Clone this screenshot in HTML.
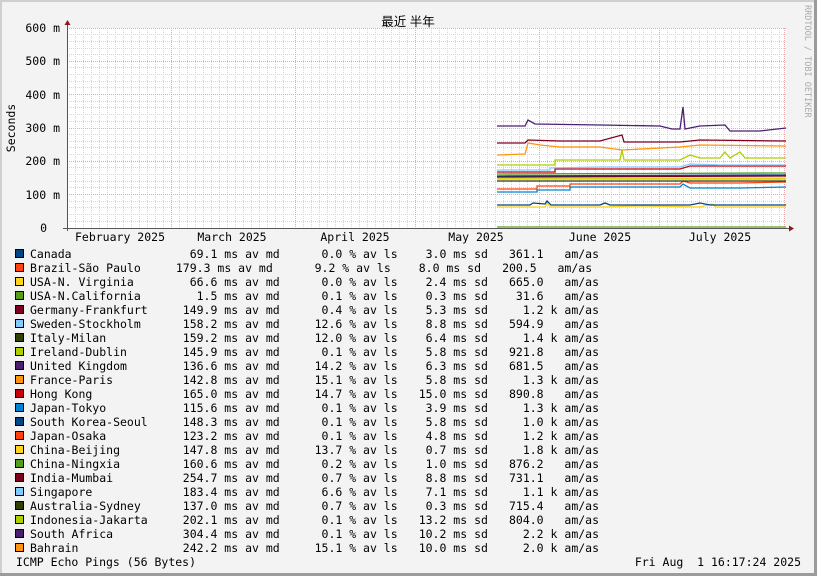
<!DOCTYPE html>
<html><head><meta charset="utf-8"><style>
html,body{margin:0;padding:0;background:#f3f3f3;}
svg{display:block;}
text{font-family:"DejaVu Sans Mono","Liberation Mono",monospace;font-size:11.5px;fill:#000;}
.e{text-anchor:end;}
</style></head><body>
<svg width="817" height="576" viewBox="0 0 817 576" xmlns="http://www.w3.org/2000/svg">
<rect x="0" y="0" width="817" height="576" fill="#f3f3f3"/>
<rect x="0" y="0" width="817" height="2" fill="#cfcfcf"/>
<rect x="0" y="0" width="2" height="576" fill="#cfcfcf"/>
<rect x="0" y="573" width="817" height="3" fill="#9b9b9b"/>
<rect x="814" y="0" width="3" height="576" fill="#9b9b9b"/>
<rect x="67" y="28" width="719" height="200" fill="#fff"/>
<g stroke="#d6d6d6" stroke-width="1" stroke-dasharray="1,1">
<path d="M67 34.5H786M67 41.5H786M67 48.5H786M67 54.5H786M67 67.5H786M67 74.5H786M67 81.5H786M67 87.5H786M67 101.5H786M67 107.5H786M67 114.5H786M67 121.5H786M67 134.5H786M67 141.5H786M67 147.5H786M67 154.5H786M67 167.5H786M67 174.5H786M67 181.5H786M67 187.5H786M67 201.5H786M67 207.5H786M67 214.5H786M67 221.5H786"/>
<path d="M75.5 28V228M83.5 28V228M91.5 28V228M99.5 28V228M107.5 28V228M115.5 28V228M123.5 28V228M131.5 28V228M139.5 28V228M147.5 28V228M155.5 28V228M163.5 28V228M179.5 28V228M187.5 28V228M195.5 28V228M203.5 28V228M211.5 28V228M219.5 28V228M227.5 28V228M235.5 28V228M243.5 28V228M251.5 28V228M259.5 28V228M267.5 28V228M275.5 28V228M283.5 28V228M303.5 28V228M311.5 28V228M319.5 28V228M327.5 28V228M335.5 28V228M343.5 28V228M351.5 28V228M359.5 28V228M367.5 28V228M375.5 28V228M383.5 28V228M391.5 28V228M399.5 28V228M407.5 28V228M423.5 28V228M431.5 28V228M439.5 28V228M447.5 28V228M455.5 28V228M463.5 28V228M471.5 28V228M479.5 28V228M487.5 28V228M495.5 28V228M503.5 28V228M511.5 28V228M519.5 28V228M527.5 28V228M547.5 28V228M555.5 28V228M563.5 28V228M571.5 28V228M579.5 28V228M587.5 28V228M595.5 28V228M603.5 28V228M611.5 28V228M619.5 28V228M627.5 28V228M635.5 28V228M643.5 28V228M651.5 28V228M667.5 28V228M675.5 28V228M683.5 28V228M691.5 28V228M699.5 28V228M707.5 28V228M715.5 28V228M723.5 28V228M731.5 28V228M739.5 28V228M747.5 28V228M755.5 28V228M763.5 28V228M771.5 28V228M779.5 28V228"/>
</g>
<g stroke="#e8a8a8" stroke-width="1" stroke-dasharray="1,1">
<path d="M67 28.5H786M67 61.5H786M67 94.5H786M67 128.5H786M67 161.5H786M67 194.5H786"/>
<path d="M171.5 28V228M295.5 28V228M415.5 28V228M539.5 28V228M659.5 28V228M784.5 28V228"/>
</g>
<g fill="none" stroke-width="1.3">
<polyline stroke="#579d1c" points="497,227 786,227"/>
<polyline stroke="#ffd320" points="497,207 545,207 547,203 550,207 600,207 640,206 700,207 712,204 716,207 786,207"/>
<polyline stroke="#004586" points="497,205 530,205 533,203 545,204 547,201 551,205 600,205 605,203 610,205 690,205 700,203 710,205 786,205"/>
<polyline stroke="#0084d1" points="497,192 537,192 537,190 570,190 570,187 680,187 683,184 690,188 740,188 786,187"/>
<polyline stroke="#ff420e" points="497,189 537,189 537,186 570,186 570,184 680,184 683,181 690,183 740,183 786,182"/>
<polyline stroke="#314004" points="497,181 786,181"/>
<polyline stroke="#aecf00" points="497,179 786,179"/>
<polyline stroke="#ffd320" points="497,178 786,178"/>
<polyline stroke="#7e0021" points="497,177 786,176"/>
<polyline stroke="#004586" points="497,176 786,175"/>
<polyline stroke="#579d1c" points="497,174 786,173"/>
<polyline stroke="#c5000b" points="497,172 555,172 555,169 680,169 690,166 740,166 786,166"/>
<polyline stroke="#83caff" points="497,170 550,170 550,168 600,167 680,167 690,164 720,165 786,165"/>
<polyline stroke="#aecf00" points="497,165 555,165 555,160 620,160 622,150 624,160 680,160 690,155 700,158 720,158 725,152 730,158 740,152 745,158 786,158"/>
<polyline stroke="#ff950e" points="497,155 525,154 528,143 540,145 560,147 600,147 622,150 680,147 700,145 786,146"/>
<polyline stroke="#7e0021" points="497,143 525,143 528,140 560,141 600,141 622,135 624,142 680,142 700,140 786,141"/>
<polyline stroke="#4b1f6f" points="497,126 525,126 528,120 535,124 600,125 660,126 672,129 680,129 683,107 685,129 700,126 725,125 730,131 760,131 786,128"/>
</g>
<path d="M67.5 24V231M63 228.5H789" stroke="#555" stroke-width="1" fill="none"/>
<path d="M64.5 25L67.5 20L70.5 25Z M789 225.5L794 228.5L789 231.5Z" fill="#8b1a1a"/>
<g>
<text x="60" y="32" class="e">600 m</text>
<text x="60" y="65" class="e">500 m</text>
<text x="60" y="99" class="e">400 m</text>
<text x="60" y="132" class="e">300 m</text>
<text x="60" y="165" class="e">200 m</text>
<text x="60" y="199" class="e">100 m</text>
<text x="47" y="232" class="e">0</text>
<text x="120" y="241" text-anchor="middle">February 2025</text>
<text x="232" y="241" text-anchor="middle">March 2025</text>
<text x="355" y="241" text-anchor="middle">April 2025</text>
<text x="476" y="241" text-anchor="middle">May 2025</text>
<text x="600" y="241" text-anchor="middle">June 2025</text>
<text x="720" y="241" text-anchor="middle">July 2025</text>
</g>
<text x="408" y="26" text-anchor="middle" style="font-family:'Liberation Sans','Noto Sans CJK SC',sans-serif;font-size:12.5px">最近 半年</text>
<text transform="translate(15,128) rotate(-90)" text-anchor="middle" style="font-size:11.5px">Seconds</text>
<text transform="translate(805,5) rotate(90)" style="font-size:8.5px;fill:#aaa">RRDTOOL / TOBI OETIKER</text>
<g stroke="#000" stroke-width="1">
<rect x="15.5" y="249.5" width="8" height="8" fill="#004586"/>
<rect x="15.5" y="263.5" width="8" height="8" fill="#ff420e"/>
<rect x="15.5" y="277.5" width="8" height="8" fill="#ffd320"/>
<rect x="15.5" y="291.5" width="8" height="8" fill="#579d1c"/>
<rect x="15.5" y="305.5" width="8" height="8" fill="#7e0021"/>
<rect x="15.5" y="319.5" width="8" height="8" fill="#83caff"/>
<rect x="15.5" y="333.5" width="8" height="8" fill="#314004"/>
<rect x="15.5" y="347.5" width="8" height="8" fill="#aecf00"/>
<rect x="15.5" y="361.5" width="8" height="8" fill="#4b1f6f"/>
<rect x="15.5" y="375.5" width="8" height="8" fill="#ff950e"/>
<rect x="15.5" y="389.5" width="8" height="8" fill="#c5000b"/>
<rect x="15.5" y="403.5" width="8" height="8" fill="#0084d1"/>
<rect x="15.5" y="417.5" width="8" height="8" fill="#004586"/>
<rect x="15.5" y="431.5" width="8" height="8" fill="#ff420e"/>
<rect x="15.5" y="445.5" width="8" height="8" fill="#ffd320"/>
<rect x="15.5" y="459.5" width="8" height="8" fill="#579d1c"/>
<rect x="15.5" y="473.5" width="8" height="8" fill="#7e0021"/>
<rect x="15.5" y="487.5" width="8" height="8" fill="#83caff"/>
<rect x="15.5" y="501.5" width="8" height="8" fill="#314004"/>
<rect x="15.5" y="515.5" width="8" height="8" fill="#aecf00"/>
<rect x="15.5" y="529.5" width="8" height="8" fill="#4b1f6f"/>
<rect x="15.5" y="543.5" width="8" height="8" fill="#ff950e"/>
</g>
<g>
<!-- columns: v1 end 217.4, ms 224.3, pct end 342.3, % 349.2, sd end 446.4, ms sd 453.3, am end 543.6, unit 550.5, am/as 564.4 -->
<text x="30" y="258">Canada</text><text x="217.4" y="258" class="e">69.1</text><text x="224.3" y="258">ms av md</text><text x="342.3" y="258" class="e">0.0</text><text x="349.2" y="258">% av ls</text><text x="446.4" y="258" class="e">3.0</text><text x="453.3" y="258">ms sd</text><text x="543.6" y="258" class="e">361.1</text><text x="564.4" y="258">am/as</text>
<text x="30" y="272">Brazil-São Paulo</text><text x="210.5" y="272" class="e">179.3</text><text x="217.4" y="272">ms av md</text><text x="335.4" y="272" class="e">9.2</text><text x="342.3" y="272">% av ls</text><text x="439.5" y="272" class="e">8.0</text><text x="446.4" y="272">ms sd</text><text x="536.7" y="272" class="e">200.5</text><text x="557.5" y="272">am/as</text>
<text x="30" y="286">USA-N. Virginia</text><text x="217.4" y="286" class="e">66.6</text><text x="224.3" y="286">ms av md</text><text x="342.3" y="286" class="e">0.0</text><text x="349.2" y="286">% av ls</text><text x="446.4" y="286" class="e">2.4</text><text x="453.3" y="286">ms sd</text><text x="543.6" y="286" class="e">665.0</text><text x="564.4" y="286">am/as</text>
<text x="30" y="300">USA-N.California</text><text x="217.4" y="300" class="e">1.5</text><text x="224.3" y="300">ms av md</text><text x="342.3" y="300" class="e">0.1</text><text x="349.2" y="300">% av ls</text><text x="446.4" y="300" class="e">0.3</text><text x="453.3" y="300">ms sd</text><text x="543.6" y="300" class="e">31.6</text><text x="564.4" y="300">am/as</text>
<text x="30" y="314">Germany-Frankfurt</text><text x="217.4" y="314" class="e">149.9</text><text x="224.3" y="314">ms av md</text><text x="342.3" y="314" class="e">0.4</text><text x="349.2" y="314">% av ls</text><text x="446.4" y="314" class="e">5.3</text><text x="453.3" y="314">ms sd</text><text x="543.6" y="314" class="e">1.2</text><text x="550.5" y="314">k</text><text x="564.4" y="314">am/as</text>
<text x="30" y="328">Sweden-Stockholm</text><text x="217.4" y="328" class="e">158.2</text><text x="224.3" y="328">ms av md</text><text x="342.3" y="328" class="e">12.6</text><text x="349.2" y="328">% av ls</text><text x="446.4" y="328" class="e">8.8</text><text x="453.3" y="328">ms sd</text><text x="543.6" y="328" class="e">594.9</text><text x="564.4" y="328">am/as</text>
<text x="30" y="342">Italy-Milan</text><text x="217.4" y="342" class="e">159.2</text><text x="224.3" y="342">ms av md</text><text x="342.3" y="342" class="e">12.0</text><text x="349.2" y="342">% av ls</text><text x="446.4" y="342" class="e">6.4</text><text x="453.3" y="342">ms sd</text><text x="543.6" y="342" class="e">1.4</text><text x="550.5" y="342">k</text><text x="564.4" y="342">am/as</text>
<text x="30" y="356">Ireland-Dublin</text><text x="217.4" y="356" class="e">145.9</text><text x="224.3" y="356">ms av md</text><text x="342.3" y="356" class="e">0.1</text><text x="349.2" y="356">% av ls</text><text x="446.4" y="356" class="e">5.8</text><text x="453.3" y="356">ms sd</text><text x="543.6" y="356" class="e">921.8</text><text x="564.4" y="356">am/as</text>
<text x="30" y="370">United Kingdom</text><text x="217.4" y="370" class="e">136.6</text><text x="224.3" y="370">ms av md</text><text x="342.3" y="370" class="e">14.2</text><text x="349.2" y="370">% av ls</text><text x="446.4" y="370" class="e">6.3</text><text x="453.3" y="370">ms sd</text><text x="543.6" y="370" class="e">681.5</text><text x="564.4" y="370">am/as</text>
<text x="30" y="384">France-Paris</text><text x="217.4" y="384" class="e">142.8</text><text x="224.3" y="384">ms av md</text><text x="342.3" y="384" class="e">15.1</text><text x="349.2" y="384">% av ls</text><text x="446.4" y="384" class="e">5.8</text><text x="453.3" y="384">ms sd</text><text x="543.6" y="384" class="e">1.3</text><text x="550.5" y="384">k</text><text x="564.4" y="384">am/as</text>
<text x="30" y="398">Hong Kong</text><text x="217.4" y="398" class="e">165.0</text><text x="224.3" y="398">ms av md</text><text x="342.3" y="398" class="e">14.7</text><text x="349.2" y="398">% av ls</text><text x="446.4" y="398" class="e">15.0</text><text x="453.3" y="398">ms sd</text><text x="543.6" y="398" class="e">890.8</text><text x="564.4" y="398">am/as</text>
<text x="30" y="412">Japan-Tokyo</text><text x="217.4" y="412" class="e">115.6</text><text x="224.3" y="412">ms av md</text><text x="342.3" y="412" class="e">0.1</text><text x="349.2" y="412">% av ls</text><text x="446.4" y="412" class="e">3.9</text><text x="453.3" y="412">ms sd</text><text x="543.6" y="412" class="e">1.3</text><text x="550.5" y="412">k</text><text x="564.4" y="412">am/as</text>
<text x="30" y="426">South Korea-Seoul</text><text x="217.4" y="426" class="e">148.3</text><text x="224.3" y="426">ms av md</text><text x="342.3" y="426" class="e">0.1</text><text x="349.2" y="426">% av ls</text><text x="446.4" y="426" class="e">5.8</text><text x="453.3" y="426">ms sd</text><text x="543.6" y="426" class="e">1.0</text><text x="550.5" y="426">k</text><text x="564.4" y="426">am/as</text>
<text x="30" y="440">Japan-Osaka</text><text x="217.4" y="440" class="e">123.2</text><text x="224.3" y="440">ms av md</text><text x="342.3" y="440" class="e">0.1</text><text x="349.2" y="440">% av ls</text><text x="446.4" y="440" class="e">4.8</text><text x="453.3" y="440">ms sd</text><text x="543.6" y="440" class="e">1.2</text><text x="550.5" y="440">k</text><text x="564.4" y="440">am/as</text>
<text x="30" y="454">China-Beijing</text><text x="217.4" y="454" class="e">147.8</text><text x="224.3" y="454">ms av md</text><text x="342.3" y="454" class="e">13.7</text><text x="349.2" y="454">% av ls</text><text x="446.4" y="454" class="e">0.7</text><text x="453.3" y="454">ms sd</text><text x="543.6" y="454" class="e">1.8</text><text x="550.5" y="454">k</text><text x="564.4" y="454">am/as</text>
<text x="30" y="468">China-Ningxia</text><text x="217.4" y="468" class="e">160.6</text><text x="224.3" y="468">ms av md</text><text x="342.3" y="468" class="e">0.2</text><text x="349.2" y="468">% av ls</text><text x="446.4" y="468" class="e">1.0</text><text x="453.3" y="468">ms sd</text><text x="543.6" y="468" class="e">876.2</text><text x="564.4" y="468">am/as</text>
<text x="30" y="482">India-Mumbai</text><text x="217.4" y="482" class="e">254.7</text><text x="224.3" y="482">ms av md</text><text x="342.3" y="482" class="e">0.7</text><text x="349.2" y="482">% av ls</text><text x="446.4" y="482" class="e">8.8</text><text x="453.3" y="482">ms sd</text><text x="543.6" y="482" class="e">731.1</text><text x="564.4" y="482">am/as</text>
<text x="30" y="496">Singapore</text><text x="217.4" y="496" class="e">183.4</text><text x="224.3" y="496">ms av md</text><text x="342.3" y="496" class="e">6.6</text><text x="349.2" y="496">% av ls</text><text x="446.4" y="496" class="e">7.1</text><text x="453.3" y="496">ms sd</text><text x="543.6" y="496" class="e">1.1</text><text x="550.5" y="496">k</text><text x="564.4" y="496">am/as</text>
<text x="30" y="510">Australia-Sydney</text><text x="217.4" y="510" class="e">137.0</text><text x="224.3" y="510">ms av md</text><text x="342.3" y="510" class="e">0.7</text><text x="349.2" y="510">% av ls</text><text x="446.4" y="510" class="e">0.3</text><text x="453.3" y="510">ms sd</text><text x="543.6" y="510" class="e">715.4</text><text x="564.4" y="510">am/as</text>
<text x="30" y="524">Indonesia-Jakarta</text><text x="217.4" y="524" class="e">202.1</text><text x="224.3" y="524">ms av md</text><text x="342.3" y="524" class="e">0.1</text><text x="349.2" y="524">% av ls</text><text x="446.4" y="524" class="e">13.2</text><text x="453.3" y="524">ms sd</text><text x="543.6" y="524" class="e">804.0</text><text x="564.4" y="524">am/as</text>
<text x="30" y="538">South Africa</text><text x="217.4" y="538" class="e">304.4</text><text x="224.3" y="538">ms av md</text><text x="342.3" y="538" class="e">0.1</text><text x="349.2" y="538">% av ls</text><text x="446.4" y="538" class="e">10.2</text><text x="453.3" y="538">ms sd</text><text x="543.6" y="538" class="e">2.2</text><text x="550.5" y="538">k</text><text x="564.4" y="538">am/as</text>
<text x="30" y="552">Bahrain</text><text x="217.4" y="552" class="e">242.2</text><text x="224.3" y="552">ms av md</text><text x="342.3" y="552" class="e">15.1</text><text x="349.2" y="552">% av ls</text><text x="446.4" y="552" class="e">10.0</text><text x="453.3" y="552">ms sd</text><text x="543.6" y="552" class="e">2.0</text><text x="550.5" y="552">k</text><text x="564.4" y="552">am/as</text>
<text x="16" y="566">ICMP Echo Pings (56 Bytes)</text>
<text x="801" y="566" class="e" xml:space="preserve">Fri Aug  1 16:17:24 2025</text>
</g>
</svg>
</body></html>
